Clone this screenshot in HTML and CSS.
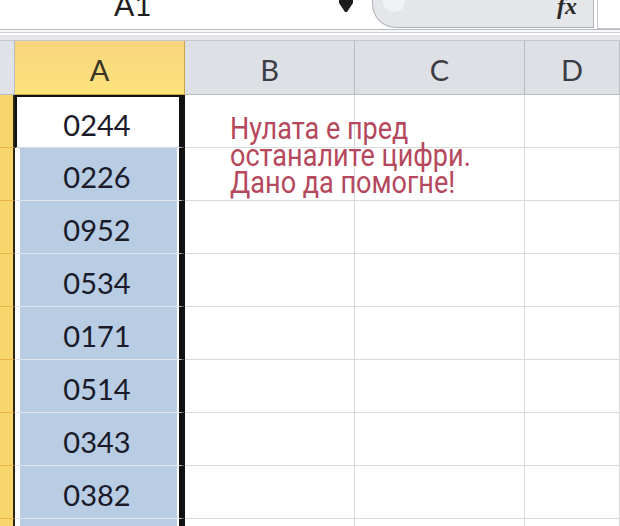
FILE: index.html
```html
<!DOCTYPE html>
<html lang="bg">
<head>
    <meta charset="UTF-8">
    <title>Excel - водеща нула</title>
    <link rel="stylesheet" href="styles.css">
</head>
<body>
    <div class="toolbar">
        <div class="namebox">
            <span class="name">A1</span>
            <svg class="drop" width="14" height="13" viewBox="0 0 14 13">
                <polygon points="0,0 14,0 14,3 8,12 6,12 0,3" fill="#1c1c1c"/>
            </svg>
        </div>
        <div class="formula">
            <span class="knob"></span>
            <span class="fx">fx</span>
        </div>
        <div class="tail"></div>
    </div>
    <div class="strip"></div>

    <div class="sheet" id="sheet">
        <div class="corner"></div>
        <div class="colhead active">A</div>
        <div class="colhead">B</div>
        <div class="colhead">C</div>
        <div class="colhead">D</div>
    </div>

    <div class="note">
        Нулата е пред<br>
        останалите цифри.<br>
        Дано да помогне!
    </div>

    <script>
        const values = ["0244", "0226", "0952", "0534", "0171", "0514", "0343", "0382", ""];
        const sheet = document.getElementById("sheet");

        values.forEach((val, i) => {
            const row = document.createElement("div");
            row.className = "rowhead";
            sheet.appendChild(row);

            const a = document.createElement("div");
            a.className = i === 0 ? "cell col-a first" : "cell col-a";
            const num = document.createElement("span");
            num.className = "num";
            num.textContent = val;
            a.appendChild(num);
            sheet.appendChild(a);

            for (let c = 0; c < 3; c++) {
                const cell = document.createElement("div");
                cell.className = "cell";
                sheet.appendChild(cell);
            }
        });
    </script>
</body>
</html>
```

FILE: styles.css
```css
body {
    margin: 0;
    height: 526px;
    background-color: #ffffff;
    font-family: Lato, "Open Sans", sans-serif;
    overflow: hidden;
    position: relative;
}

/* formula bar */
.toolbar {
    display: flex;
    height: 29px;
    background-color: #ffffff;
    overflow: hidden;
}

.namebox {
    width: 372px;
    position: relative;
    flex-shrink: 0;
}

.name {
    display: block;
    margin-left: 114px;
    margin-top: -11px;
    font-size: 30px;
    line-height: 1;
    color: #1e1e1e;
}

.drop {
    position: absolute;
    top: 0;
    left: 339px;
}

.formula {
    width: 222px;
    height: 28px;
    flex-shrink: 0;
    box-sizing: border-box;
    background-color: #e4e6ea;
    border: 1px solid #aeb2b8;
    border-top: none;
    border-bottom-left-radius: 24px;
    display: flex;
    justify-content: flex-end;
    position: relative;
    overflow: hidden;
}

.knob {
    position: absolute;
    left: 10px;
    top: -12px;
    width: 22px;
    height: 24px;
    border-radius: 11px;
    background-color: #f1f2f4;
}

.fx {
    font-family: "Liberation Serif", serif;
    font-style: italic;
    font-weight: bold;
    font-size: 24px;
    line-height: 1;
    margin-top: -6px;
    margin-right: 16px;
    color: #2a2a2a;
}

.tail {
    flex: 1;
    border-left: 1px solid #c8cacd;
    margin-left: 3px;
    border-bottom: 1px solid #c3c6ca;
}

.strip {
    height: 12px;
    box-sizing: border-box;
    border-top: 1px solid #b7babf;
    border-bottom: 1px solid #c4c7cb;
    background: linear-gradient(#f7f8f9 0px, #f7f8f9 2px, #c9cbce 2px, #c9cbce 3px, #ffffff 3px, #ffffff 5px, #e1e3e6 5px, #e7e9ec 10px);
}

/* grid */
.sheet {
    display: grid;
    grid-template-columns: 15px 170px 170px 170px 95px;
    grid-template-rows: 54px;
    grid-auto-rows: 53px;
}

.corner {
    background-color: #dfe3e8;
    border-right: 1px solid #b7bbc0;
    border-bottom: 1px solid #b7bbc0;
}

.colhead {
    display: flex;
    align-items: center;
    justify-content: center;
    padding-top: 4px;
    box-sizing: border-box;
    font-size: 29px;
    color: #3c3c44;
    background-color: #dde1e6;
    border-right: 1px solid #b9bdc2;
    border-bottom: 1px solid #b9bdc2;
}

.colhead.active {
    background: linear-gradient(#f8d57e, #fde37c);
    border-right-color: #c9a448;
    border-bottom-color: #c9a448;
    color: #3a3422;
}

.rowhead {
    background-color: #f9d66c;
    border-bottom: 1px solid #e7b646;
    border-right: 2px solid #2c2618;
    box-sizing: border-box;
}

.cell {
    border-right: 1px solid #d8d9db;
    border-bottom: 1px solid #d8d9db;
    box-sizing: border-box;
}

.col-a {
    display: flex;
    align-items: center;
    justify-content: center;
    padding: 0 2px 0 3px;
    border-left: 2px solid #ffffff;
    border-right: 6px solid #111111;
    border-bottom: 1px solid #dde4ee;
    background-color: #b8cce4;
    background-clip: content-box;
    font-size: 29px;
    color: #1a1a28;
}

.col-a.first {
    background-color: #ffffff;
    border-top: 2px solid #111111;
    border-left: 2px solid #111111;
    border-bottom-color: #d8d9db;
}

.num {
    padding-top: 4px;
    margin-left: -3px;
}

/* text box over the sheet */
.note {
    position: absolute;
    left: 230px;
    top: 115px;
    font-family: Roboto, sans-serif;
    font-size: 32px;
    line-height: 27px;
    color: #b5485d;
    white-space: nowrap;
    transform: scaleX(0.845);
    transform-origin: left top;
}
```
